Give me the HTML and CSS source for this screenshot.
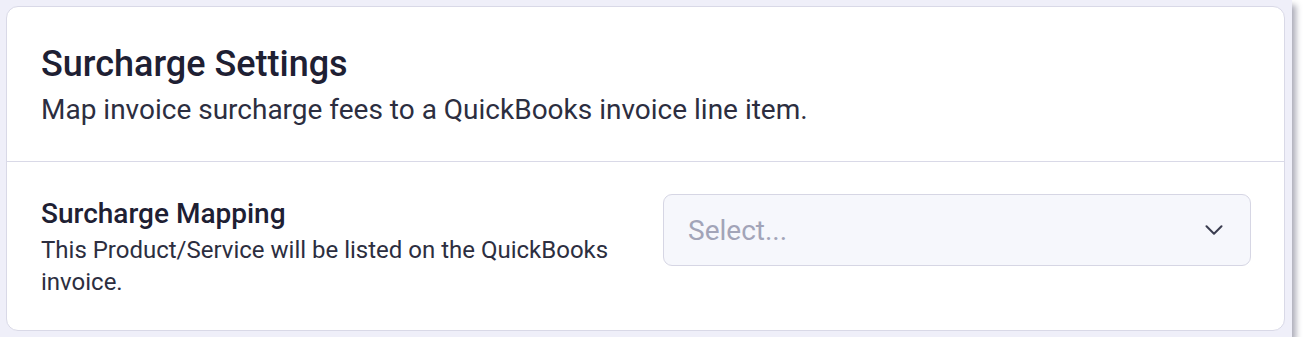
FILE: index.html
```html
<!DOCTYPE html>
<html lang="en">
<head>
<meta charset="utf-8">
<title>Surcharge Settings</title>
<link rel="stylesheet" href="styles.css">
</head>
<body>
<div class="frame">
  <section class="card">
    <header class="card-header">
      <h2 class="title">Surcharge Settings</h2>
      <p class="subtitle">Map invoice surcharge fees to a QuickBooks invoice line item.</p>
    </header>
    <div class="card-body">
      <div class="field-info">
        <h3 class="label">Surcharge Mapping</h3>
        <p class="desc">This Product/Service will be listed on the QuickBooks invoice.</p>
      </div>
      <div class="select">
        <span class="placeholder">Select...</span>
        <svg class="chevron" width="18" height="10" viewBox="0 0 18 10" aria-hidden="true">
          <path d="M1.5 1.2 L9 8.7 L16.5 1.2" fill="none" stroke="#3b3d50" stroke-width="2" stroke-linecap="round" stroke-linejoin="round"/>
        </svg>
      </div>
    </div>
  </section>
</div>
</body>
</html>
```
FILE: styles.css
```css
* { box-sizing: border-box; }
html, body { margin: 0; padding: 0; background: #ffffff; }
body { font-family: Roboto, "Liberation Sans", Arial, sans-serif; color: #1e2033; }

.frame {
  width: 1292px;
  height: 337px;
  background: #efeff9;
  padding: 6px 7px 6px 6px;
  box-shadow: 4px 5px 6px rgba(50, 50, 80, 0.4);
}

.card {
  height: 100%;
  background: #ffffff;
  border: 1px solid #d9d9e7;
  border-radius: 12px;
  display: flex;
  flex-direction: column;
}

.card-header {
  padding: 37px 34px 33px;
  border-bottom: 1px solid #d9d9e7;
}

.title {
  margin: 0;
  font-size: 36px;
  line-height: 40px;
  font-weight: 500;
  color: #1e2033;
}

.subtitle {
  margin: 8px 0 0;
  font-size: 28px;
  line-height: 36px;
  font-weight: 400;
  color: #2c2e40;
}

.card-body {
  padding: 32px 33px 0 34px;
  display: grid;
  grid-template-columns: 1fr 1fr;
  column-gap: 34px;
  align-items: start;
}

.label {
  margin: 0;
  font-size: 28px;
  line-height: 40px;
  font-weight: 500;
  color: #1e2033;
}

.desc {
  margin: 0;
  font-size: 24px;
  line-height: 32px;
  color: #2c2e40;
}

.select {
  height: 72px;
  background: #f6f7fc;
  border: 1px solid #d6d6e4;
  border-radius: 9px;
  display: flex;
  align-items: center;
  justify-content: space-between;
  padding: 0 27px 0 24px;
}

.placeholder {
  font-size: 28px;
  color: #a2a4b8;
}

.chevron { display: block; }
```
